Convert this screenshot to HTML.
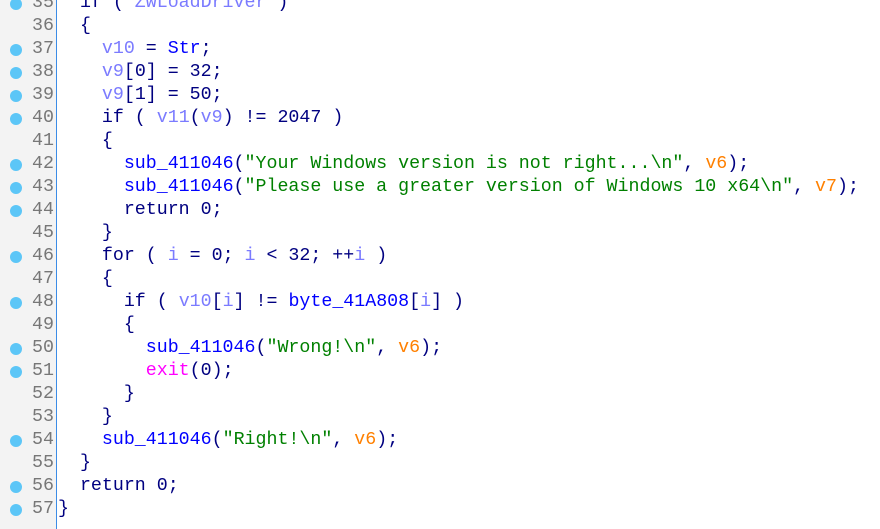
<!DOCTYPE html>
<html><head><style>
body{margin:0;width:880px;height:529px;overflow:hidden;background:#fff;font-family:"Liberation Mono",monospace;font-size:18.3px;}
#g{position:absolute;left:0;top:0;width:56px;height:529px;background:#f3f3f3;border-right:1px solid #3c8ce6;}
.l{position:absolute;left:0;height:23px;line-height:23px;white-space:pre;width:880px}
.n{position:absolute;left:0;width:54px;text-align:right;color:#777}
.d{position:absolute;left:10px;top:6px;width:12px;height:12px;border-radius:50%;background:#5cc6f7}
.c{position:absolute;left:58px;color:#000080}
.v{color:#7b7bff}.f{color:#0000ff}.s{color:#008000}.o{color:#ff8000}.m{color:#ff00ff}
</style></head><body>
<div id="g"></div>
<div class="l" style="top:-8px"><span class="d"></span><span class="n">35</span><span class="c">  if ( <span class="v">ZwLoadDriver</span> )</span></div>
<div class="l" style="top:15px"><span class="n">36</span><span class="c">  {</span></div>
<div class="l" style="top:38px"><span class="d"></span><span class="n">37</span><span class="c">    <span class="v">v10</span> = <span class="f">Str</span>;</span></div>
<div class="l" style="top:61px"><span class="d"></span><span class="n">38</span><span class="c">    <span class="v">v9</span>[0] = 32;</span></div>
<div class="l" style="top:84px"><span class="d"></span><span class="n">39</span><span class="c">    <span class="v">v9</span>[1] = 50;</span></div>
<div class="l" style="top:107px"><span class="d"></span><span class="n">40</span><span class="c">    if ( <span class="v">v11</span>(<span class="v">v9</span>) != 2047 )</span></div>
<div class="l" style="top:130px"><span class="n">41</span><span class="c">    {</span></div>
<div class="l" style="top:153px"><span class="d"></span><span class="n">42</span><span class="c">      <span class="f">sub_411046</span>(<span class="s">"Your Windows version is not right...\n"</span>, <span class="o">v6</span>);</span></div>
<div class="l" style="top:176px"><span class="d"></span><span class="n">43</span><span class="c">      <span class="f">sub_411046</span>(<span class="s">"Please use a greater version of Windows 10 x64\n"</span>, <span class="o">v7</span>);</span></div>
<div class="l" style="top:199px"><span class="d"></span><span class="n">44</span><span class="c">      return 0;</span></div>
<div class="l" style="top:222px"><span class="n">45</span><span class="c">    }</span></div>
<div class="l" style="top:245px"><span class="d"></span><span class="n">46</span><span class="c">    for ( <span class="v">i</span> = 0; <span class="v">i</span> &lt; 32; ++<span class="v">i</span> )</span></div>
<div class="l" style="top:268px"><span class="n">47</span><span class="c">    {</span></div>
<div class="l" style="top:291px"><span class="d"></span><span class="n">48</span><span class="c">      if ( <span class="v">v10</span>[<span class="v">i</span>] != <span class="f">byte_41A808</span>[<span class="v">i</span>] )</span></div>
<div class="l" style="top:314px"><span class="n">49</span><span class="c">      {</span></div>
<div class="l" style="top:337px"><span class="d"></span><span class="n">50</span><span class="c">        <span class="f">sub_411046</span>(<span class="s">"Wrong!\n"</span>, <span class="o">v6</span>);</span></div>
<div class="l" style="top:360px"><span class="d"></span><span class="n">51</span><span class="c">        <span class="m">exit</span>(0);</span></div>
<div class="l" style="top:383px"><span class="n">52</span><span class="c">      }</span></div>
<div class="l" style="top:406px"><span class="n">53</span><span class="c">    }</span></div>
<div class="l" style="top:429px"><span class="d"></span><span class="n">54</span><span class="c">    <span class="f">sub_411046</span>(<span class="s">"Right!\n"</span>, <span class="o">v6</span>);</span></div>
<div class="l" style="top:452px"><span class="n">55</span><span class="c">  }</span></div>
<div class="l" style="top:475px"><span class="d"></span><span class="n">56</span><span class="c">  return 0;</span></div>
<div class="l" style="top:498px"><span class="d"></span><span class="n">57</span><span class="c">}</span></div>
</body></html>
